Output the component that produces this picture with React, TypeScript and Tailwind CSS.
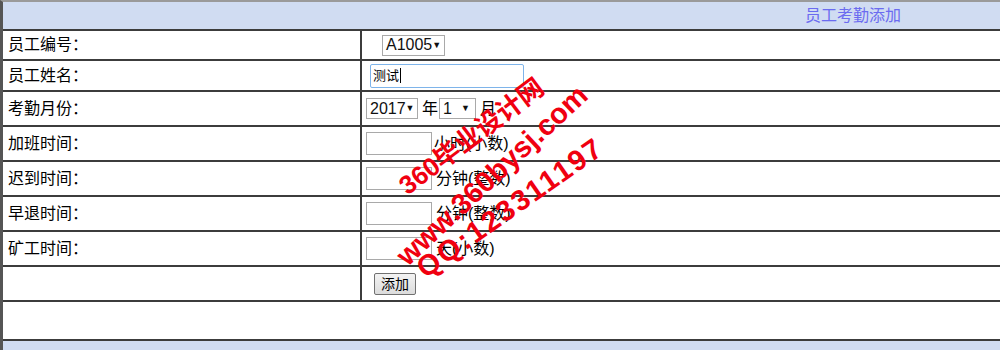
const font = "font-['Liberation_Sans','Noto_Sans_CJK_SC',sans-serif]";

function FakeSelect({ value, width }: { value: string; width: string }) {
  return (
    <div
      className={`flex h-[21px] items-center justify-between border border-[#a9a9a9] bg-white pl-[3px] pr-[5px] text-[16px] leading-none text-[#111] ${width}`}
    >
      <span>{value}</span>
      <span className="text-[9px]">▼</span>
    </div>
  );
}

function SmallInput() {
  return <div className="h-[23px] w-[66px] border border-[#a9a9a9] bg-white" />;
}

const rows: { label: string; h: string; body: React.ReactNode }[] = [
  {
    label: "员工编号：",
    h: "h-[30px]",
    body: (
      <div className="pl-[20px]">
        <FakeSelect value="A1005" width="w-[63px]" />
      </div>
    ),
  },
  {
    label: "员工姓名：",
    h: "h-[31px]",
    body: (
      <div className="pl-[8px]">
        <div className="flex h-[24px] w-[154px] items-center rounded-[2px] border border-[#7eb4ea] bg-white pl-[2px] text-[13px] text-black">
          测试<span className="ml-px h-[15px] w-px bg-black" />
        </div>
      </div>
    ),
  },
  {
    label: "考勤月份：",
    h: "h-[35px]",
    body: (
      <div className="flex items-center pl-[4px] text-[16px]">
        <FakeSelect value="2017" width="w-[52px]" />
        <span className="ml-[4px] mr-px">年</span>
        <FakeSelect value="1" width="w-[37px]" />
        <span className="ml-[4px]">月</span>
      </div>
    ),
  },
  {
    label: "加班时间：",
    h: "h-[35px]",
    body: (
      <div className="flex items-center pl-[4px] text-[16px]">
        <SmallInput />
        <span className="ml-[2px]">小时(小数)</span>
      </div>
    ),
  },
  {
    label: "迟到时间：",
    h: "h-[35px]",
    body: (
      <div className="flex items-center pl-[4px] text-[16px]">
        <SmallInput />
        <span className="ml-[4px]">分钟(整数)</span>
      </div>
    ),
  },
  {
    label: "早退时间：",
    h: "h-[35px]",
    body: (
      <div className="flex items-center pl-[4px] text-[16px]">
        <SmallInput />
        <span className="ml-[4px]">分钟(整数)</span>
      </div>
    ),
  },
  {
    label: "矿工时间：",
    h: "h-[35px]",
    body: (
      <div className="flex items-center pl-[4px] text-[16px]">
        <SmallInput />
        <span className="ml-[4px]">天(小数)</span>
      </div>
    ),
  },
  {
    label: "",
    h: "h-[35px]",
    body: (
      <div className="pl-[12px]">
        <button
          type="button"
          className="h-[22px] w-[42px] rounded-[2px] border border-[#707070] bg-gradient-to-b from-[#f3f3f3] to-[#dcdcdc] text-[14px] leading-none text-black"
        >
          添加
        </button>
      </div>
    ),
  },
];

export default function App() {
  return (
    <div className={`relative h-[350px] w-[1000px] overflow-hidden bg-white text-black ${font}`}>
      <div className="border-t-2 border-l-[3px] border-t-[#9a9a9a] border-l-[#555]">
        {/* title bar */}
        <div className="flex h-[29px] items-center justify-end border-b-2 border-[#3c3c3c] bg-[#d0dcf2] pr-[99px] text-[16px] text-[#6b6bf0]">
          员工考勤添加
        </div>

        {rows.map((r, i) => (
          <div key={i} className={`grid grid-cols-[359px_1fr] border-b-2 border-[#3c3c3c] ${r.h}`}>
            <div className="flex items-center border-r-2 border-[#3c3c3c] pl-[5px] text-[16px]">
              {r.label}
            </div>
            <div className="flex items-center">{r.body}</div>
          </div>
        ))}

        <div className="h-[39px] border-b-2 border-[#3c3c3c]" />
        <div className="h-[20px] bg-[#d0dcf2]" />
      </div>

      {/* watermark */}
      <span className="absolute left-[410px] top-[173px] origin-bottom-left -rotate-[37deg] whitespace-nowrap text-[26px] font-bold leading-none text-[#f00010]">
        360毕业设计网
      </span>
      <span className="absolute left-[411px] top-[242px] origin-bottom-left -rotate-[43deg] whitespace-nowrap text-[29px] font-bold leading-none text-[#f00010]">
        www.360bysj.com
      </span>
      <span className="absolute left-[428px] top-[254px] origin-bottom-left -rotate-[35deg] whitespace-nowrap text-[29px] font-bold leading-none tracking-[2px] text-[#f00010]">
        QQ:123311197
      </span>
    </div>
  );
}
